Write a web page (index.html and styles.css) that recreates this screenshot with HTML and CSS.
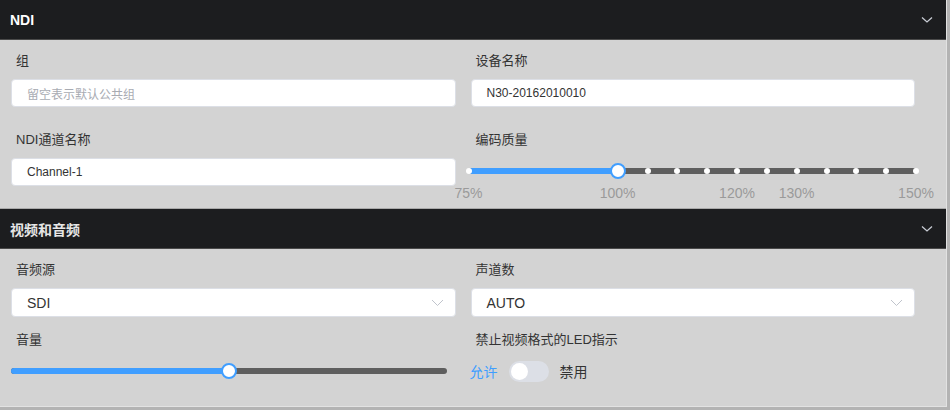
FILE: index.html
```html
<!DOCTYPE html>
<html lang="zh">
<head>
<meta charset="utf-8">
<title>NDI</title>
<link rel="stylesheet" href="styles.css">
</head>
<body>
<div class="page">
  <section class="panel">
    <header class="panel-hd">
      <span class="panel-title">NDI</span>
      <svg class="hd-chev" width="12" height="8" viewBox="0 0 12 8"><path d="M1 1.5 L6 6 L11 1.5" fill="none" stroke="#c8ccd4" stroke-width="1.3"/></svg>
    </header>
    <div class="panel-bd">
      <div class="field">
        <div class="label">组</div>
        <div class="input placeholder">留空表示默认公共组</div>
      </div>
      <div class="field">
        <div class="label">设备名称</div>
        <div class="input">N30-20162010010</div>
      </div>
      <div class="field">
        <div class="label">NDI通道名称</div>
        <div class="input">Channel-1</div>
      </div>
      <div class="field">
        <div class="label">编码质量</div>
        <div class="slider slider-q">
          <div class="track"></div>
          <div class="fill" style="width:33.333%"></div>
          <span class="stop" style="left:0%"></span>
          <span class="stop" style="left:40%"></span>
          <span class="stop" style="left:46.667%"></span>
          <span class="stop" style="left:53.333%"></span>
          <span class="stop" style="left:60%"></span>
          <span class="stop" style="left:66.667%"></span>
          <span class="stop" style="left:73.333%"></span>
          <span class="stop" style="left:80%"></span>
          <span class="stop" style="left:86.667%"></span>
          <span class="stop" style="left:93.333%"></span>
          <span class="stop" style="left:100%"></span>
          <span class="thumb" style="left:33.333%"></span>
          <span class="mark" style="left:0%">75%</span>
          <span class="mark" style="left:33.333%">100%</span>
          <span class="mark" style="left:60%">120%</span>
          <span class="mark" style="left:73.333%">130%</span>
          <span class="mark" style="left:100%">150%</span>
        </div>
      </div>
    </div>
  </section>
  <section class="panel">
    <header class="panel-hd">
      <span class="panel-title alt">视频和音频</span>
      <svg class="hd-chev" width="12" height="8" viewBox="0 0 12 8"><path d="M1 1.5 L6 6 L11 1.5" fill="none" stroke="#c8ccd4" stroke-width="1.3"/></svg>
    </header>
    <div class="panel-bd bd2">
      <div class="field">
        <div class="label">音频源</div>
        <div class="select"><span>SDI</span><svg width="13" height="8" viewBox="0 0 13 8"><path d="M1 1 L6.5 6.5 L12 1" fill="none" stroke="#c0c4cc" stroke-width="1"/></svg></div>
      </div>
      <div class="field">
        <div class="label">声道数</div>
        <div class="select"><span>AUTO</span><svg width="13" height="8" viewBox="0 0 13 8"><path d="M1 1 L6.5 6.5 L12 1" fill="none" stroke="#c0c4cc" stroke-width="1"/></svg></div>
      </div>
      <div class="field row2">
        <div class="label">音量</div>
        <div class="slider slider-v">
          <div class="track"></div>
          <div class="fill" style="width:50%"></div>
          <span class="thumb" style="left:50%"></span>
        </div>
      </div>
      <div class="field row2">
        <div class="label">禁止视频格式的LED指示</div>
        <div class="switch-row">
          <span class="sw-on">允许</span>
          <span class="switch"><span class="knob"></span></span>
          <span class="sw-off">禁用</span>
        </div>
      </div>
    </div>
  </section>
</div>
</body>
</html>
```

FILE: styles.css
```css
html {
  background: #b3b3b3;
}
body {
  margin: 0;
  font-family: "Liberation Sans", "Noto Sans CJK SC", sans-serif;
  color: #333;
}
.page {
  width: 946px;
  height: 406px;
  background: #d3d3d3;
  border-right: 1px solid #e2e2e2;
  border-bottom: 1px solid #e2e2e2;
  overflow: hidden;
}
.panel-hd {
  height: 39px;
  background: #1c1d1f;
  border-bottom: 1px solid #4a4a4a;
  display: flex;
  align-items: center;
  justify-content: space-between;
  padding: 0 10px 0 10px;
}
.panel-title {
  color: #ffffff;
  font-weight: bold;
  font-size: 14px;
}
.panel-title.alt {
  color: #e6e6e6;
}
.hd-chev {
  margin-right: 3px;
  margin-top: 1px;
}
.panel-bd {
  display: grid;
  grid-template-columns: 1fr 1fr;
  column-gap: 15px;
  row-gap: 22px;
  padding: 10px 31px 22px 11px;
  border-bottom: 1px solid #a9a9a9;
}
.bd2 {
  row-gap: 12px;
  padding-bottom: 24px;
  border-bottom: none;
}
.field {
  display: flex;
  flex-direction: column;
}
.label {
  height: 21px;
  line-height: 21px;
  font-size: 13px;
  color: #333;
  padding-left: 5px;
  margin-bottom: 8px;
}
.input, .select {
  height: 28px;
  box-sizing: border-box;
  background: #fff;
  border: 1px solid #dcdfe6;
  border-radius: 4px;
  padding: 0 15px;
  display: flex;
  align-items: center;
  font-size: 12px;
  color: #333;
}
.input.placeholder {
  color: #a8abb2;
}
.select {
  height: 29px;
  font-size: 14px;
  justify-content: space-between;
  padding-right: 11px;
}
.slider {
  position: relative;
  height: 20px;
}
.slider-q {
  margin: 3px -1px 0 -2px;
}
.slider-v {
  margin: 3px 9px 0 0;
}
.track {
  position: absolute;
  left: 0;
  right: 0;
  top: 7px;
  height: 6px;
  border-radius: 3px;
  background: #5e5e5e;
}
.fill {
  position: absolute;
  left: 0;
  top: 7px;
  height: 6px;
  border-radius: 3px 0 0 3px;
  background: #409eff;
}
.stop {
  position: absolute;
  top: 7px;
  width: 6px;
  height: 6px;
  margin-left: -3px;
  border-radius: 50%;
  background: #fff;
}
.thumb {
  position: absolute;
  top: 2px;
  width: 16px;
  height: 16px;
  margin-left: -8px;
  box-sizing: border-box;
  border: 2px solid #409eff;
  border-radius: 50%;
  background: #fff;
}
.mark {
  position: absolute;
  top: 25px;
  transform: translateX(-50%);
  font-size: 14px;
  line-height: 14px;
  color: #9a9a9a;
  white-space: nowrap;
}
.switch-row {
  display: flex;
  align-items: center;
  height: 20px;
  margin-top: 3px;
  margin-left: -1px;
  font-size: 14px;
}
.sw-on {
  color: #409eff;
}
.sw-off {
  color: #333;
}
.switch {
  width: 40px;
  height: 21px;
  border-radius: 11px;
  background: #dcdfe6;
  margin: 0 11px;
  display: flex;
  align-items: center;
  padding-left: 2px;
  box-sizing: border-box;
}
.knob {
  width: 17px;
  height: 17px;
  border-radius: 50%;
  background: #fff;
}
```
